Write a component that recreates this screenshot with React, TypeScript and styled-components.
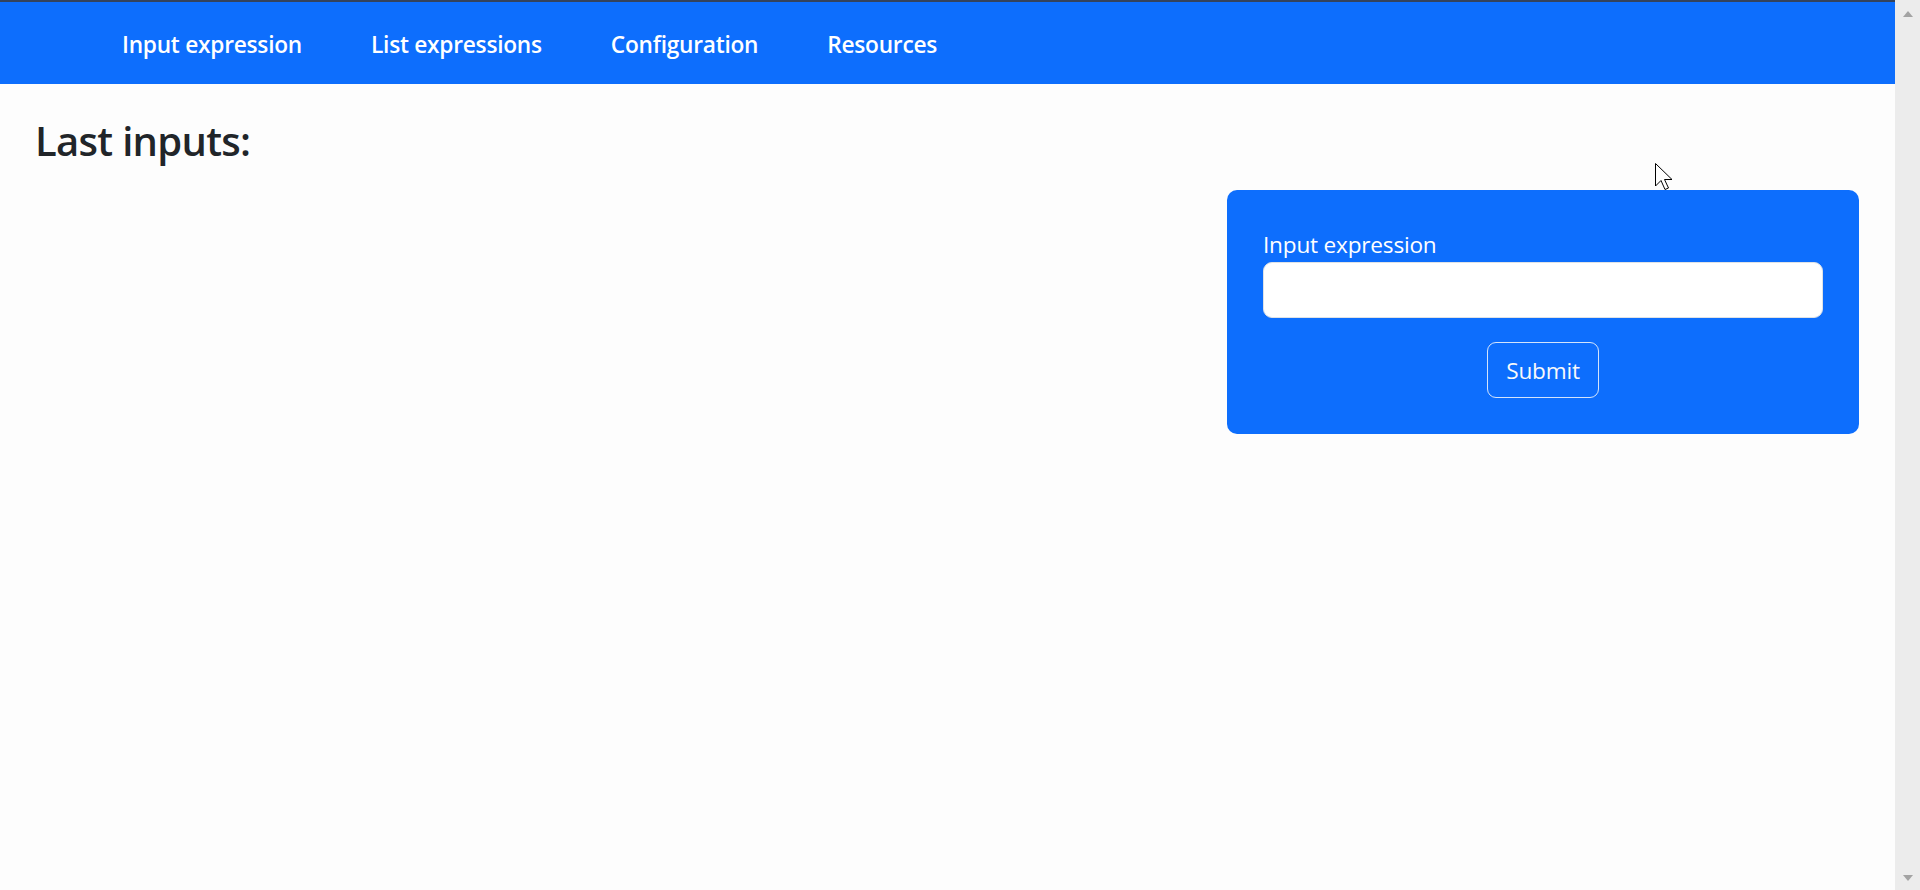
import React from "react";
import styled, { createGlobalStyle } from "styled-components";

const GlobalStyle = createGlobalStyle`
  html, body {
    margin: 0;
    padding: 0;
    height: 100%;
    overflow: hidden;
  }
  body {
    background: #fdfdfd;
    font-family: "Open Sans", "Noto Sans", sans-serif;
    color: #212529;
  }
  * { box-sizing: border-box; }
`;

const Shell = styled.div`
  display: flex;
  width: 1920px;
  height: 890px;
`;

const Page = styled.div`
  flex: 1;
  display: flex;
  flex-direction: column;
  min-width: 0;
`;

const NavBar = styled.nav`
  height: 84px;
  background: #0d6efd;
  border-top: 2px solid #34435c;
  display: flex;
  align-items: center;
  padding: 3px 0 0 122px;
`;

const NavList = styled.ul`
  display: flex;
  gap: 69px;
  list-style: none;
  margin: 0;
  padding: 0;
`;

const NavLink = styled.a`
  color: #ffffff;
  font-size: 22.7px;
  font-weight: 600;
  text-decoration: none;
  letter-spacing: -0.25px;
  cursor: pointer;
`;

const Content = styled.main`
  display: grid;
  grid-template-columns: 1fr 632px;
  padding: 0 36px 0 35px;
`;

const Heading = styled.h2`
  margin: 33px 0 0 0;
  font-size: 40px;
  font-weight: 600;
  line-height: 1.2;
  letter-spacing: -0.7px;
  color: #212529;
`;

const Side = styled.div`
  padding-top: 106px;
`;

const Card = styled.form`
  background: #0d6efd;
  border-radius: 10px;
  padding: 37px 36px 36px 36px;
  display: flex;
  flex-direction: column;
`;

const Label = styled.label`
  color: #ffffff;
  font-size: 22.6px;
  line-height: 35px;
  letter-spacing: -0.2px;
`;

const TextInput = styled.input`
  height: 56px;
  border: 1px solid #dee2e6;
  border-radius: 9px;
  background: #ffffff;
  font-size: 22px;
  padding: 8px 14px;
  outline: none;
  font-family: inherit;
`;

const ButtonRow = styled.div`
  display: flex;
  justify-content: center;
  margin-top: 24px;
`;

const SubmitButton = styled.button`
  height: 56px;
  width: 112px;
  background: transparent;
  border: 1px solid rgba(248, 249, 250, 0.85);
  border-radius: 9px;
  color: #f8f9fa;
  font-family: inherit;
  font-size: 22.6px;
  letter-spacing: -0.2px;
  padding: 0;
  cursor: pointer;
`;

const ScrollBar = styled.div`
  width: 25px;
  height: 890px;
  background: #ececec;
  display: flex;
  flex-direction: column;
  justify-content: space-between;
  align-items: center;
  padding: 11px 0 9px 0;
`;

const Arrow = styled.div<{ $down?: boolean }>`
  width: 0;
  height: 0;
  border-left: 5.5px solid transparent;
  border-right: 5.5px solid transparent;
  ${(p) =>
    p.$down
      ? "border-top: 6px solid #a3a3a3;"
      : "border-bottom: 6px solid #a3a3a3;"}
`;

const Pointer = styled.svg`
  position: absolute;
  left: 1655px;
  top: 163px;
  pointer-events: none;
`;

export default function App() {
  return (
    <>
      <GlobalStyle />
      <Shell>
        <Page>
          <NavBar>
            <NavList>
              <li><NavLink>Input expression</NavLink></li>
              <li><NavLink>List expressions</NavLink></li>
              <li><NavLink>Configuration</NavLink></li>
              <li><NavLink>Resources</NavLink></li>
            </NavList>
          </NavBar>
          <Content>
            <div>
              <Heading>Last inputs:</Heading>
            </div>
            <Side>
              <Card onSubmit={(e) => e.preventDefault()}>
                <Label htmlFor="expr">Input expression</Label>
                <TextInput id="expr" type="text" />
                <ButtonRow>
                  <SubmitButton type="submit">Submit</SubmitButton>
                </ButtonRow>
              </Card>
            </Side>
          </Content>
        </Page>
        <ScrollBar>
          <Arrow />
          <Arrow $down />
        </ScrollBar>
      </Shell>
      <Pointer width="20" height="28" viewBox="0 0 20 28">
        <path
          d="M0.5 0.5 L0.5 23 L6 17.5 L10 26.5 L13.5 25 L9.5 16.5 L17 16.5 Z"
          fill="#ffffff"
          stroke="#000000"
          strokeWidth="1"
          strokeLinejoin="miter"
        />
      </Pointer>
    </>
  );
}
